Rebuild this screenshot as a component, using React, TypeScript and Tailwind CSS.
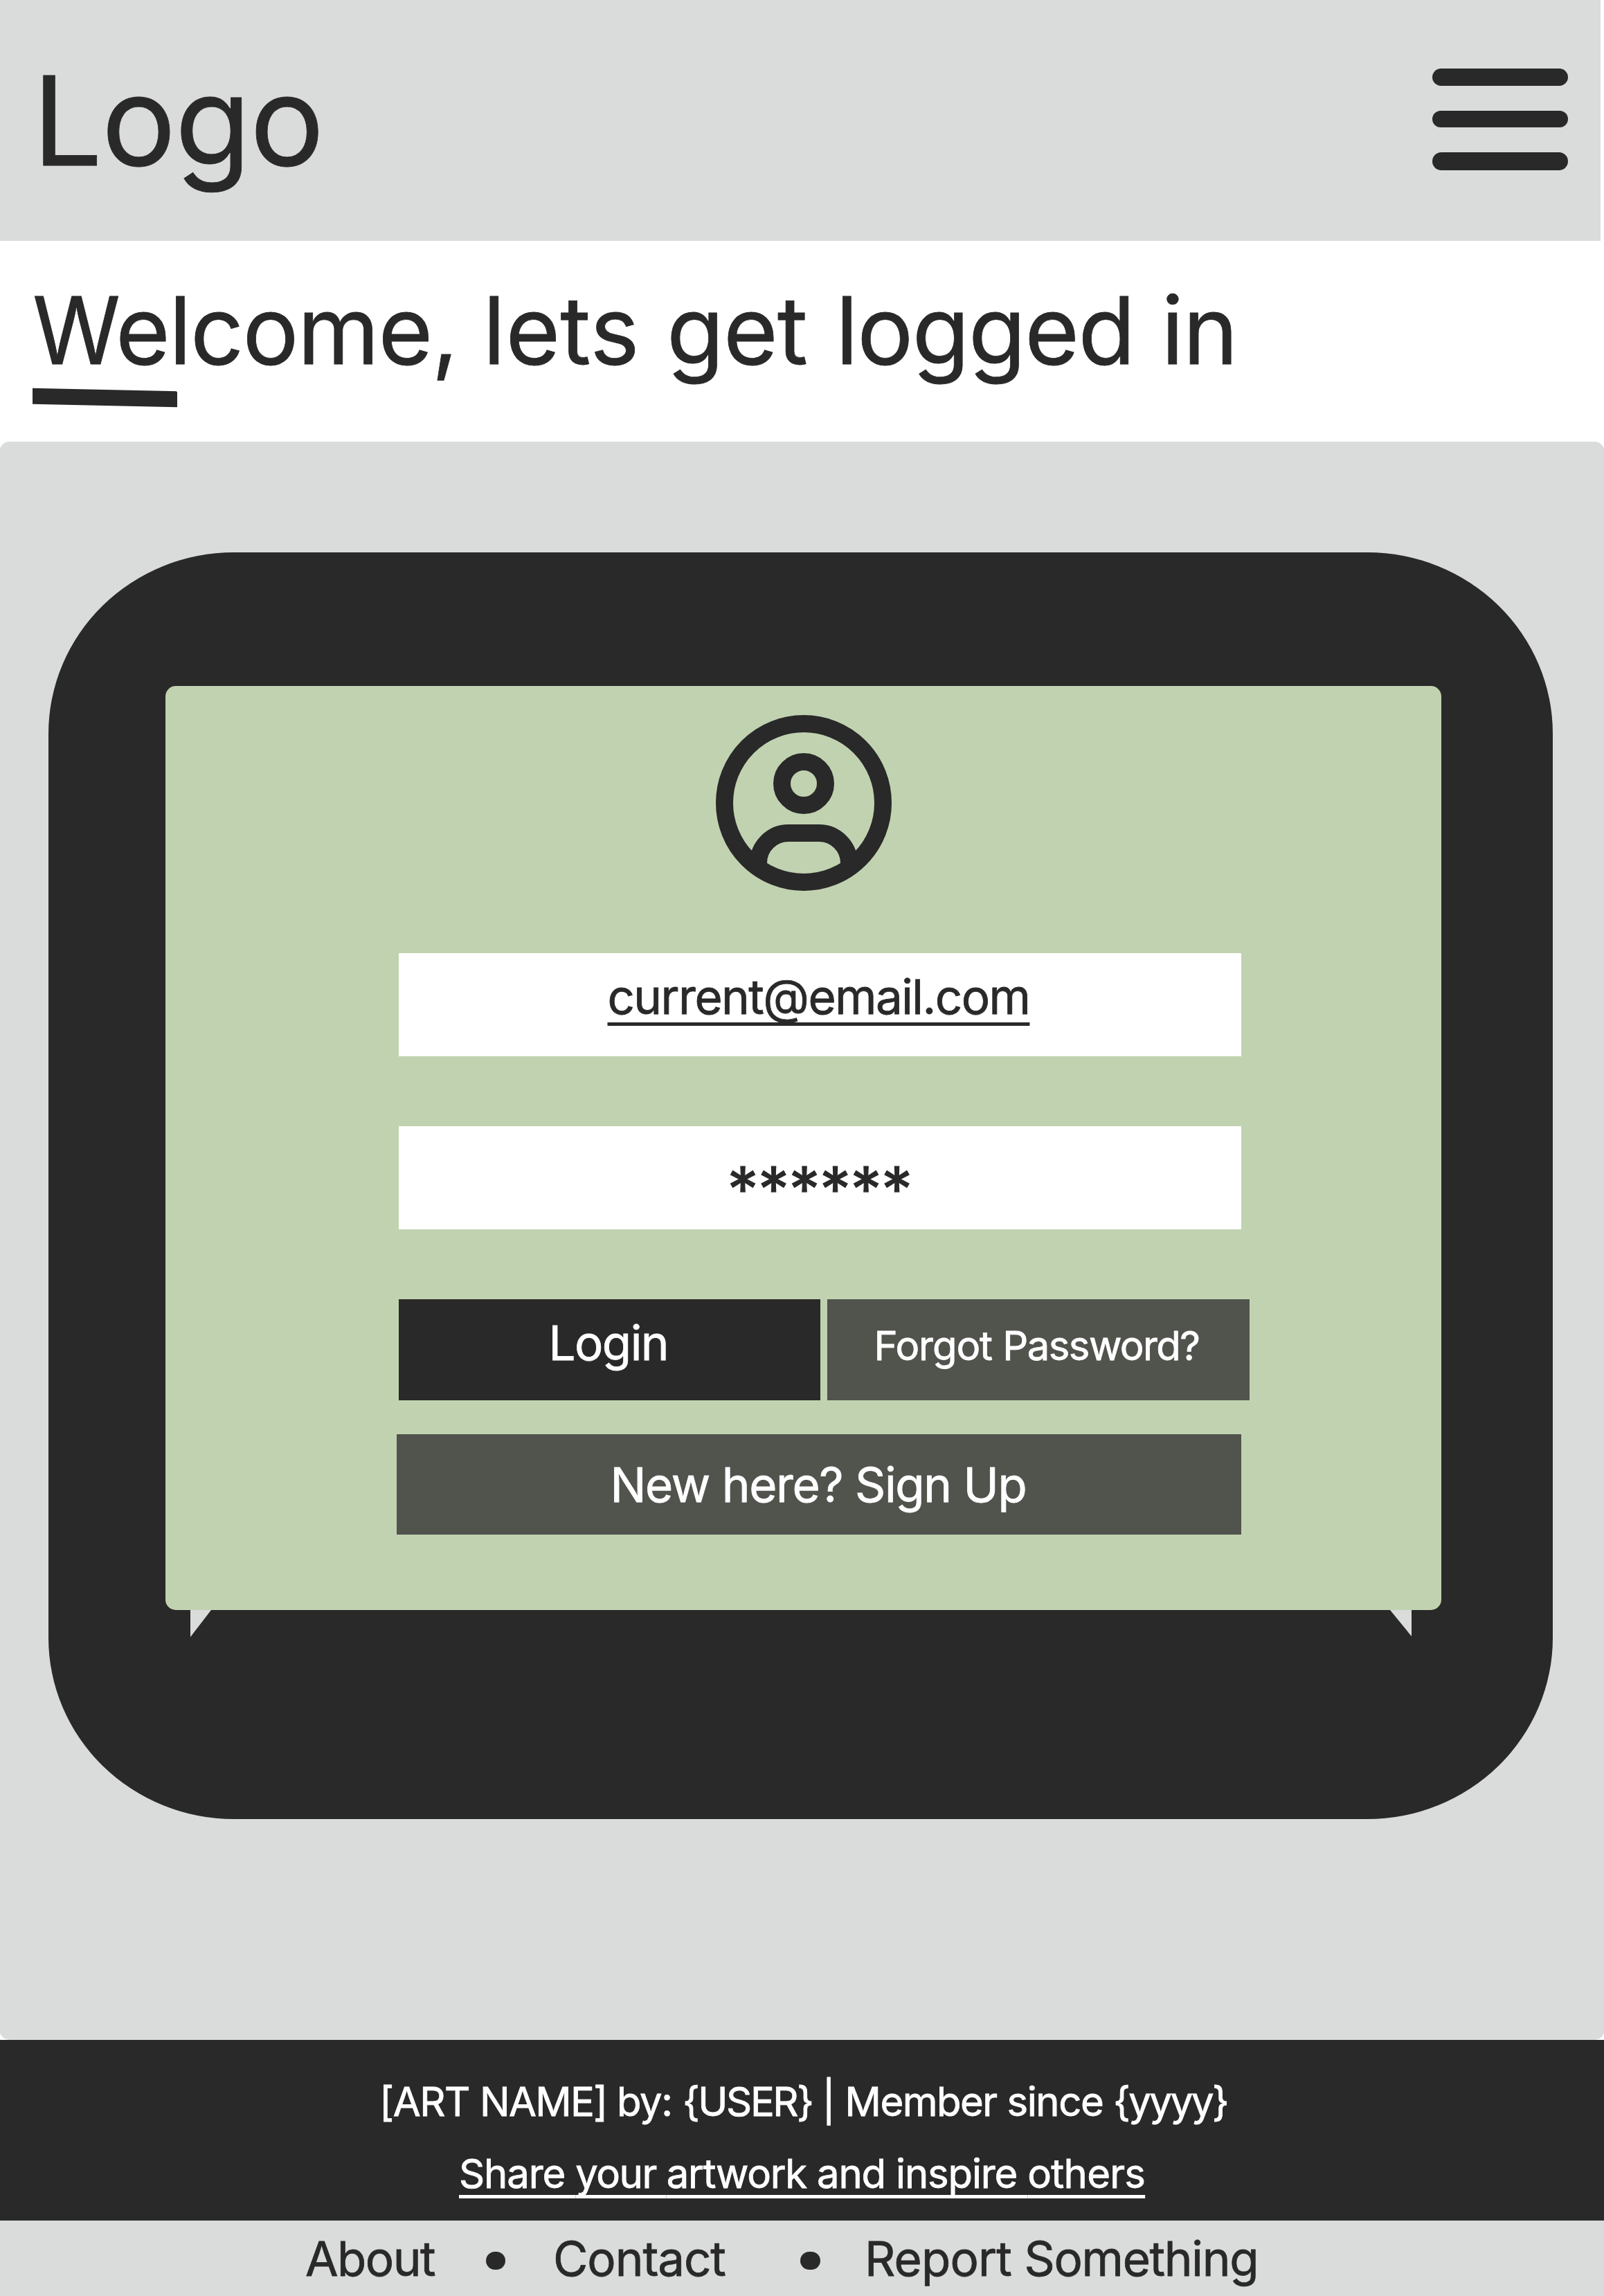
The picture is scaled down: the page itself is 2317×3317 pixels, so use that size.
function UserIcon() {
  return (
    <svg className="h-[254px] w-[254px]" viewBox="0 0 254 254" fill="none" stroke="currentColor" strokeWidth="25">
      <circle cx="127" cy="127" r="114.5" />
      <circle cx="127" cy="99" r="31.5" />
      <path d="M61.5 214A43.5 43.5 0 0 1 105 170.5H149A43.5 43.5 0 0 1 192.5 214" />
    </svg>
  );
}

function Header() {
  return (
    <header className="flex h-[348px] w-[2312px] items-start justify-between bg-[#dadcdb] pr-[47px] pl-[47px]">
      <h1 className="mt-[85px] text-[179px] leading-none tracking-[-1.4px] whitespace-nowrap">Logo</h1>
      <button aria-label="Menu" className="mt-[99px] flex w-[196px] flex-col gap-[36px]">
        <span className="h-[25px] rounded-full bg-[#292929]" />
        <span className="h-[24px] rounded-full bg-[#292929]" />
        <span className="h-[26px] rounded-full bg-[#292929]" />
      </button>
    </header>
  );
}

function LoginScreen() {
  return (
    <div className="relative mx-auto h-[1830px] w-[2173px] rounded-[268px/262px] bg-[#292929] pt-[193px] pl-[169px]">
      <svg className="absolute top-[1527px] left-[205px] h-[40px] w-[30px]" viewBox="0 0 30 40" fill="#dadcdb">
        <path d="M0 0H30V1L0 40Z" />
      </svg>
      <svg className="absolute top-[1527px] left-[1938px] h-[40px] w-[31px]" viewBox="0 0 31 40" fill="#dadcdb">
        <path d="M0 0H31V39L0 1Z" />
      </svg>
      <div className="relative flex h-[1335px] w-[1843px] flex-col rounded-[15px] bg-[#c1d2b1] pt-[42px] pl-[334px]">
        <div className="ml-[461px]">
          <UserIcon />
        </div>
        <div className="mt-[90px] ml-[3px] h-[149px] w-[1217px] bg-white pt-[29px] pl-[302px] text-[69px] leading-none tracking-[-1.55px] whitespace-nowrap">
          <span className="underline decoration-[5px] underline-offset-[12px] [text-decoration-skip-ink:none]">current@email.com</span>
        </div>
        <div className="mt-[101px] ml-[3px] h-[149px] w-[1217px] bg-white pt-[46px] pl-[475px] text-[90px] leading-none tracking-[-0.6px] whitespace-nowrap [-webkit-text-stroke:1.2px]">
          ******
        </div>
        <div className="mt-[101px] ml-[3px] flex gap-[10px] text-left text-white">
          <button className="flex h-[146px] w-[609px] items-start bg-[#292929] pt-[29px] pl-[217px] text-[69px] leading-none tracking-[-1.52px] whitespace-nowrap">
            Login
          </button>
          <button className="flex h-[146px] w-[610px] items-start bg-[#51534d] pt-[38px] pl-[68px] text-[58px] leading-none whitespace-pre">
            <span className="tracking-[-1.07px]">Forgot </span>
            <span className="tracking-[-1.55px]">Password?</span>
          </button>
        </div>
        <button className="mt-[49px] flex h-[145px] w-[1220px] items-start bg-[#51534d] pt-[39px] pl-[309px] text-[69px] leading-none tracking-[-1.4px] whitespace-nowrap text-white">
          New here? Sign Up
        </button>
      </div>
    </div>
  );
}

export default function App() {
  return (
    <div className="h-[3317px] w-[2317px] overflow-hidden bg-white font-['Inter',sans-serif] text-[#292929] [-webkit-text-stroke:0.8px]">
      <Header />
      <section className="h-[290px] pt-[62px] pl-[47px]">
        <h2 className="flex text-[135px] leading-none whitespace-pre">
          <span className="w-[120px]">
            <span className="inline-block origin-left scale-x-[0.955]">W</span>
          </span>
          <span className="w-[530.5px] tracking-[-1.65px]">elcome, </span>
          <span className="w-[265.5px] tracking-[0.2px]">lets </span>
          <span className="w-[244px] tracking-[-0.9px]">get </span>
          <span className="w-[470.5px] tracking-[-1.5px]">logged </span>
          <span className="tracking-[-1.5px]">in</span>
        </h2>
        <div className="mt-[18px] h-[23px] w-[209px] skew-y-[1.2deg] bg-[#292929]" />
      </section>
      <main className="-mx-px h-[2309px] rounded-[15px] bg-[#dadcdb] pt-[160px] pr-[5px]">
        <LoginScreen />
      </main>
      <section className="flex h-[261px] flex-col items-start bg-[#292929] pt-[60px] text-[58px] leading-none whitespace-pre text-white">
        <p className="ml-[548px] flex">
          <span className="w-[145px] tracking-[-1.46px]">[ART </span>
          <span className="w-[198px] tracking-[-1.73px]">NAME] </span>
          <span className="w-[95px] tracking-[-1.4px]">by: </span>
          <span className="w-[201.5px] tracking-[-2.4px]">{'{USER} '}</span>
          <span className="w-[33px] tracking-[-1.2px]">| </span>
          <span className="w-[234px] tracking-[-1.5px]">Member </span>
          <span className="w-[153.5px] tracking-[-1.4px]">since </span>
          <span className="tracking-[-2.4px]">{'{yyyy}'}</span>
        </p>
        <a className="mt-[46px] ml-[663px] underline decoration-[5px] underline-offset-[10px] [text-decoration-skip-ink:none]">
          <span className="tracking-[-1.13px]">Share </span>
          <span className="tracking-[-1.46px]">your </span>
          <span className="tracking-[-1.24px]">artwork </span>
          <span className="tracking-[-1.15px]">and inspire </span>
          <span className="tracking-[-0.75px]">others</span>
        </a>
      </section>
      <nav className="flex h-[109px] items-start bg-[#dadcdb] pt-[21px] pl-[441px] text-[69px] leading-none whitespace-pre">
        <a className="w-[261px] tracking-[-1.52px]">About</a>
        <span className="mt-[24px] h-[26px] w-[28px] rounded-full bg-[#292929]" />
        <a className="ml-[69px] w-[357px] tracking-[-1.05px]">Contact</a>
        <span className="mt-[24px] h-[26px] w-[29px] rounded-full bg-[#292929]" />
        <a className="ml-[64px]">
          <span className="tracking-[-0.83px]">Report </span>
          <span className="tracking-[-1.3px]">Something</span>
        </a>
      </nav>
    </div>
  );
}
